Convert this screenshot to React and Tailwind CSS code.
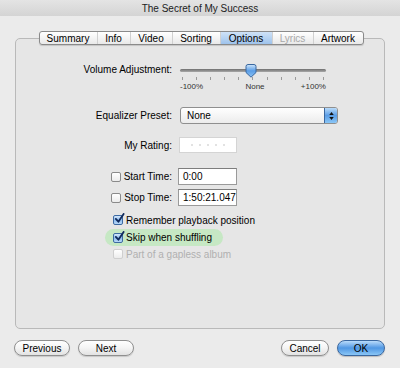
import React from "react";

const font = { fontFamily: '"Liberation Sans", Arial, sans-serif' };

function Checkbox({ checked, disabled }) {
  if (checked) {
    return (
      <div className="w-[10px] h-[10px] shrink-0 rounded-[2px] border border-[#3d6aa3] bg-gradient-to-b from-[#d5e8fb] via-[#8fbdf0] to-[#b7d8f8] relative">
        <svg viewBox="0 0 12 12" className="absolute -top-[3px] left-[0px] w-[11px] h-[11px]">
          <path d="M2 6.5 L4.8 9.5 L10.5 1" fill="none" stroke="#102a5c" strokeWidth="2" strokeLinecap="round" strokeLinejoin="round" />
        </svg>
      </div>
    );
  }
  return (
    <div
      className={
        "w-[10px] h-[10px] shrink-0 rounded-[2px] border bg-gradient-to-b from-white to-[#ececec] " +
        (disabled ? "border-[#cfcfcf]" : "border-[#8a8a8a]")
      }
    />
  );
}

function Field({ value, w = "w-[59px]" }) {
  return (
    <div className={"h-[17px] bg-white border border-[#9a9a9a] border-t-[#7d7d7d] flex items-center pl-[4px] text-[10px] text-black " + w}>
      {value}
    </div>
  );
}

function Button({ children, w, primary }) {
  if (primary) {
    return (
      <div className={"h-[16px] rounded-full border border-[#3a679f] bg-gradient-to-b from-[#b9dbfa] via-[#4f97e3] to-[#8ac6f6] flex items-center justify-center text-[10px] text-black shadow-[0_1px_1px_rgba(0,0,0,0.2)] " + w}>
        {children}
      </div>
    );
  }
  return (
    <div className={"h-[16px] rounded-full border border-[#8f8f8f] bg-gradient-to-b from-white via-[#f4f4f4] to-[#e2e2e2] flex items-center justify-center text-[10px] text-black shadow-[0_1px_1px_rgba(0,0,0,0.15)] " + w}>
      {children}
    </div>
  );
}

const tabs = [
  { name: "Summary", w: "w-[57px]" },
  { name: "Info", w: "w-[33px]" },
  { name: "Video", w: "w-[42px]" },
  { name: "Sorting", w: "w-[48px]" },
  { name: "Options", w: "w-[52px]", sel: true },
  { name: "Lyrics", w: "w-[41px]", dis: true },
  { name: "Artwork", w: "w-[50px]" },
];

export default function App() {
  return (
    <div className="w-[400px] h-[368px] bg-[#ebebeb] flex flex-col overflow-hidden" style={font}>
      {/* title bar */}
      <div className="h-[16px] bg-gradient-to-b from-[#e4e4e4] to-[#d4d4d4] flex items-center justify-center text-[10px] text-[#222]">
        The Secret of My Success
      </div>

      <div className="px-[15px] pt-[15px] flex flex-col">
        {/* tabs */}
        <div className="flex justify-center -mb-[7px] relative z-10 pl-[2px]">
          <div className="flex h-[14px] rounded-[3px] border border-[#8a8a8a] bg-gradient-to-b from-white to-[#e9e9e9] overflow-hidden shadow-[0_1px_1px_rgba(0,0,0,0.15)]">
            {tabs.map((t, i) => (
              <div
                key={t.name}
                className={
                  "flex items-center justify-center text-[10px] " +
                  t.w +
                  (i > 0 ? " border-l border-[#d0d0d0]" : "") +
                  (t.sel ? " bg-gradient-to-b from-[#cfe2f7] to-[#9ec3ec] text-[#0d1f3a]" : "") +
                  (t.dis ? " text-[#a8a8a8]" : " text-black")
                }
              >
                {t.name}
              </div>
            ))}
          </div>
        </div>

        {/* panel */}
        <div className="h-[291px] rounded-[5px] border border-[#b9b9b9] bg-[#e6e6e6] flex flex-col text-[10px] text-black">
          {/* Volume */}
          <div className="flex items-start mt-[24px]">
            <div className="w-[156px] h-[14px] leading-[14px] text-right">Volume Adjustment:</div>
            <div className="ml-[8px] w-[146px] flex flex-col">
              <div className="h-[14px] relative flex items-center">
                <div className="w-full h-[3px] rounded-full bg-gradient-to-b from-[#6f6f6f] to-[#a9a9a9]" />
                <svg viewBox="0 0 12 14" className="absolute left-[65px] top-[1px] w-[12px] h-[14px]">
                  <defs>
                    <linearGradient id="th" x1="0" y1="0" x2="0" y2="1">
                      <stop offset="0" stopColor="#cfe6fb" />
                      <stop offset="0.5" stopColor="#5a9de6" />
                      <stop offset="1" stopColor="#8cc3f4" />
                    </linearGradient>
                  </defs>
                  <path d="M1 2.5 Q1 0.5 3 0.5 H9 Q11 0.5 11 2.5 V8.5 L6 13.2 L1 8.5 Z" fill="url(#th)" stroke="#3a679f" strokeWidth="1" />
                </svg>
              </div>
              <div className="h-[4px] flex justify-between px-[2px]">
                {Array.from({ length: 11 }).map((_, i) => (
                  <div key={i} className="w-[1px] h-[3px] bg-[#9a9a9a]" />
                ))}
              </div>
              <div className="h-[11px] flex justify-between items-center text-[8px] text-[#333]">
                <span>-100%</span>
                <span className="ml-[6px]">None</span>
                <span>+100%</span>
              </div>
            </div>
          </div>

          {/* Equalizer */}
          <div className="flex items-center mt-[15px]">
            <div className="w-[156px] text-right">Equalizer Preset:</div>
            <div className="ml-[8px] w-[158px] h-[17px] rounded-[3px] border border-[#8f8f8f] bg-gradient-to-b from-white to-[#ececec] flex items-center overflow-hidden">
              <span className="pl-[6px] flex-1">None</span>
              <div className="w-[13px] h-full bg-gradient-to-b from-[#b9dbfa] via-[#5a9de6] to-[#8ac6f6] border-l border-[#3a679f] flex flex-col items-center justify-center gap-[2px]">
                <svg viewBox="0 0 6 4" className="w-[5px] h-[3px]"><path d="M0 4 L3 0 L6 4 Z" fill="#111" /></svg>
                <svg viewBox="0 0 6 4" className="w-[5px] h-[3px]"><path d="M0 0 L3 4 L6 0 Z" fill="#111" /></svg>
              </div>
            </div>
          </div>

          {/* Rating */}
          <div className="flex items-center mt-[13px]">
            <div className="w-[156px] text-right">My Rating:</div>
            <div className="ml-[7px] w-[58px] h-[16px] bg-white border border-[#d4d4d4] flex items-center justify-center gap-[6px]">
              {Array.from({ length: 5 }).map((_, i) => (
                <div key={i} className="w-[2px] h-[2px] rounded-full bg-[#d8d8d8]" />
              ))}
            </div>
          </div>

          {/* Start time */}
          <div className="flex items-center mt-[15px]">
            <div className="w-[156px] flex items-center justify-end gap-[3px]">
              <Checkbox />
              <span>Start Time:</span>
            </div>
            <div className="ml-[6px]"><Field value="0:00" /></div>
          </div>

          {/* Stop time */}
          <div className="flex items-center mt-[4px]">
            <div className="w-[156px] flex items-center justify-end gap-[3px]">
              <Checkbox />
              <span>Stop Time:</span>
            </div>
            <div className="ml-[6px]"><Field value="1:50:21.047" /></div>
          </div>

          {/* Remember */}
          <div className="flex items-center h-[12px] mt-[8px] ml-[97px] gap-[3px]">
            <Checkbox checked />
            <span>Remember playback position</span>
          </div>

          {/* Skip */}
          <div className="flex mt-[3px] ml-[89px]">
            <div className="h-[17px] rounded-full bg-[#c6e8c4] flex items-center gap-[3px] pl-[8px] pr-[11px]">
              <Checkbox checked />
              <span>Skip when shuffling</span>
            </div>
          </div>

          {/* Gapless */}
          <div className="flex items-center h-[12px] mt-[2px] ml-[97px] gap-[3px] text-[#b0b0b0]">
            <Checkbox disabled />
            <span>Part of a gapless album</span>
          </div>
        </div>

        {/* buttons */}
        <div className="flex items-center mt-[11px] -ml-[1px]">
          <Button w="w-[56px]">Previous</Button>
          <div className="ml-[8px]"><Button w="w-[56px]">Next</Button></div>
          <div className="flex-1" />
          <Button w="w-[48px]">Cancel</Button>
          <div className="ml-[8px]"><Button w="w-[48px]" primary>OK</Button></div>
        </div>
      </div>
    </div>
  );
}
